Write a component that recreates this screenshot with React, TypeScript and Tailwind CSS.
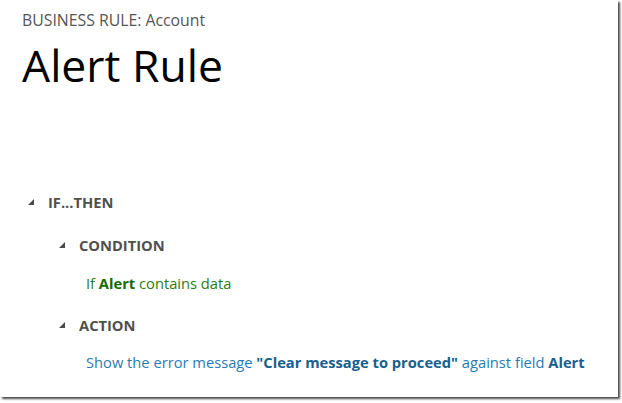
import React from 'react';

function Caret() {
  return (
    <svg width="6" height="6" viewBox="0 0 6 6" className="shrink-0">
      <polygon points="6,0 6,6 0,6" fill="#4a4a4a" />
    </svg>
  );
}

function Section({ label, indent, children }: { label: string; indent: string; children?: React.ReactNode }) {
  return (
    <div className={indent}>
      <div className="flex items-center h-[20px]">
        <Caret />
        <span className="ml-[14px] text-[14.7px] font-bold text-[#505050] leading-none">{label}</span>
      </div>
      {children}
    </div>
  );
}

export default function App() {
  return (
    <div className="w-[622px] h-[403px] bg-white" style={{ fontFamily: '"Segoe UI", "Open Sans", sans-serif' }}>
      <div className="w-[618px] h-[397px] bg-white shadow-[2px_2px_2px_0_rgba(0,0,0,0.7)] pl-[22px] pt-[9px]">
        <div className="text-[15.8px] text-[#555] leading-[22px]">BUSINESS RULE: Account</div>
        <h1 className="text-[44.5px] text-black leading-[56px] mt-[6px]">Alert Rule</h1>

        <div className="mt-[99px] flex flex-col">
          <Section label="IF...THEN" indent="ml-[6px]" />
          <Section label="CONDITION" indent="ml-[37px] mt-[23px]">
            <div className="ml-[27px] mt-[18px] text-[14.7px] text-[#2b7d12] leading-[20px]">
              If <span className="font-bold text-[#156b00]">Alert</span> contains data
            </div>
          </Section>
          <Section label="ACTION" indent="ml-[37px] mt-[22px]">
            <div className="ml-[27px] mt-[17px] text-[14.7px] text-[#2a7bb0] leading-[20px] whitespace-nowrap">
              Show the error message <span className="font-bold text-[#17608e]">"Clear message to proceed"</span> against field{' '}
              <span className="font-bold text-[#17608e]">Alert</span>
            </div>
          </Section>
        </div>
      </div>
    </div>
  );
}
